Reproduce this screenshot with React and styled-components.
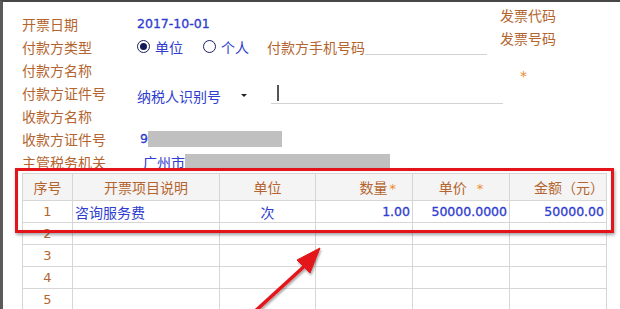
import React from "react";
import styled, { createGlobalStyle } from "styled-components";

const GlobalStyle = createGlobalStyle`
  html, body {
    margin: 0;
    padding: 0;
    background: #ffffff;
  }
  body {
    font-family: "Noto Sans CJK SC", "DejaVu Sans", sans-serif;
  }
`;

const LABEL = "#b4652f";
const BLUE = "#2e3ccf";

const Window = styled.div`
  position: relative;
  width: 620px;
  height: 309px;
  box-sizing: border-box;
  overflow: hidden;
  background: #ffffff;
  border-top: 2px solid #474747;
  border-left: 3px solid #5a5a5a;
`;

const Top = styled.div`
  display: flex;
  align-items: flex-start;
`;

const Form = styled.div`
  display: grid;
  grid-template-columns: 115px 1fr;
  grid-auto-rows: 23px;
  padding: 10px 0 0 19px;
  width: 478px;
`;

const Label = styled.div`
  display: flex;
  align-items: center;
  font-size: 14px;
  color: ${LABEL};
  white-space: nowrap;
`;

const Value = styled.div`
  display: flex;
  align-items: center;
  font-size: 14px;
  color: ${BLUE};
  white-space: nowrap;
  padding-top: ${(p) => p.$shift || 0}px;
`;

const Num = styled.span`
  font-family: "DejaVu Sans", sans-serif;
  font-size: 12.5px;
  color: ${BLUE};
  margin-left: ${(p) => p.$ml || 0}px;
  -webkit-text-stroke: 0.3px ${BLUE};
`;

const Radio = styled.span`
  display: inline-flex;
  align-items: center;
  gap: 5px;
  margin-right: ${(p) => p.$mr || 0}px;
  color: ${BLUE};
`;

const Dot = styled.span`
  width: 13px;
  height: 13px;
  border-radius: 50%;
  border: 1.5px solid #1b2060;
  box-sizing: border-box;
  display: inline-flex;
  align-items: center;
  justify-content: center;
  &::after {
    content: "";
    width: 7px;
    height: 7px;
    border-radius: 50%;
    background: ${(p) => (p.$on ? "#12185a" : "transparent")};
  }
`;

const InlineLabel = styled.span`
  color: ${LABEL};
`;

const Line = styled.span`
  display: inline-block;
  width: ${(p) => p.$w}px;
  height: 15px;
  border-bottom: 1.5px solid #d2d2d2;
  margin-left: ${(p) => p.$ml || 0}px;
  position: relative;
`;

const Caret = styled.span`
  position: absolute;
  left: 6px;
  top: -3px;
  width: 1.5px;
  height: 16px;
  background: #555;
`;

const Select = styled.span`
  display: inline-flex;
  align-items: center;
  width: 124px;
  justify-content: space-between;
`;

const SmallArrow = styled.span`
  width: 0;
  height: 0;
  border-left: 3px solid transparent;
  border-right: 3px solid transparent;
  border-top: 3px solid #222;
  margin-right: 14px;
`;

const Redact = styled.span`
  display: inline-block;
  width: ${(p) => p.$w}px;
  height: 16px;
  background: #c0c0c0;
`;

const Place = styled.span`
  margin-left: ${(p) => p.$ml || 0}px;
`;

const Side = styled.div`
  display: flex;
  flex-direction: column;
  padding-top: 2px;
  font-size: 14px;
  color: ${LABEL};
  line-height: 23px;
`;

const Star = styled.span`
  color: #f08a2a;
  font-family: "DejaVu Sans", sans-serif;
  font-size: 14px;
  line-height: 20px;
  margin: 16px 0 0 20px;
`;

const Table = styled.table`
  margin-left: 19px;
  width: 584px;
  border-collapse: collapse;
  table-layout: fixed;
  font-size: 14px;
  & td, & th {
    border: 1px solid #d6d6d6;
    padding: 0 2px;
    white-space: nowrap;
    overflow: hidden;
  }
`;

const Head = styled.th`
  height: 26px;
  background: #f4f4f4;
  font-weight: normal;
  color: ${LABEL};
  text-align: ${(p) => p.$align || "center"};
  padding-right: ${(p) => p.$pr || 2}px !important;
`;

const HeadStar = styled.span`
  color: #f08a2a;
  font-family: "DejaVu Sans", sans-serif;
  font-size: 13px;
  margin-left: ${(p) => p.$ml || 3}px;
`;

const Cell = styled.td`
  height: 21px;
  color: ${BLUE};
  text-align: ${(p) => p.$align || "left"};
  font-family: ${(p) =>
    p.$num ? '"DejaVu Sans", sans-serif' : '"Noto Sans CJK SC", sans-serif'};
  font-size: ${(p) => (p.$num ? "12.5px" : "14px")};
  -webkit-text-stroke: ${(p) => (p.$num ? "0.3px" : "0")} ${BLUE};
`;

const IndexCell = styled.td`
  height: 21px;
  color: ${LABEL};
  text-align: center;
  font-family: "DejaVu Sans", sans-serif;
  font-size: 13px;
`;

const Frame = styled.div`
  position: absolute;
  left: 12px;
  top: 166px;
  width: 599px;
  height: 65px;
  box-sizing: border-box;
  border: 3px solid #e3151a;
  box-shadow: 1px 2px 3px rgba(0, 0, 0, 0.35), inset 0 0 1px rgba(0, 0, 0, 0.3);
  pointer-events: none;
`;

const Arrow = styled.svg`
  position: absolute;
  left: 0;
  top: 0;
  pointer-events: none;
`;

const rows = [
  { no: 1, name: "咨询服务费", unit: "次", qty: "1.00", price: "50000.0000", amount: "50000.00" },
  { no: 2 },
  { no: 3 },
  { no: 4 },
  { no: 5 },
];

const App = () => {
  return (
    <>
      <GlobalStyle />
      <Window>
        <Top>
          <Form>
            <Label>开票日期</Label>
            <Value>
              <Num>2017-10-01</Num>
            </Value>

            <Label>付款方类型</Label>
            <Value>
              <Radio $mr={20}>
                <Dot $on />
                单位
              </Radio>
              <Radio $mr={18}>
                <Dot />
                个人
              </Radio>
              <InlineLabel>付款方手机号码</InlineLabel>
              <Line $w={122} />
            </Value>

            <Label>付款方名称</Label>
            <Value />

            <Label>付款方证件号</Label>
            <Value $shift={6}>
              <Select>
                纳税人识别号
                <SmallArrow />
              </Select>
              <Line $w={232} $ml={10}>
                <Caret />
              </Line>
            </Value>

            <Label>收款方名称</Label>
            <Value />

            <Label>收款方证件号</Label>
            <Value>
              <Num $ml={3}>9</Num>
              <Redact $w={134} />
            </Value>

            <Label>主管税务机关</Label>
            <Value>
              <Place $ml={6}>广州市</Place>
              <Redact $w={205} />
            </Value>
          </Form>
          <Side>
            <span>发票代码</span>
            <span>发票号码</span>
            <Star>*</Star>
          </Side>
        </Top>

        <Table>
          <colgroup>
            <col style={{ width: 50 }} />
            <col style={{ width: 147 }} />
            <col style={{ width: 96 }} />
            <col style={{ width: 97 }} />
            <col style={{ width: 97 }} />
            <col style={{ width: 97 }} />
          </colgroup>
          <thead>
            <tr>
              <Head>序号</Head>
              <Head>开票项目说明</Head>
              <Head>单位</Head>
              <Head $align="right" $pr={16}>
                数量<HeadStar $ml={2}>*</HeadStar>
              </Head>
              <Head>
                单价<HeadStar $ml={10}>*</HeadStar>
              </Head>
              <Head $align="right">金额（元）</Head>
            </tr>
          </thead>
          <tbody>
            {rows.map((r) => (
              <tr key={r.no}>
                <IndexCell>{r.no}</IndexCell>
                <Cell>{r.name}</Cell>
                <Cell $align="center">{r.unit}</Cell>
                <Cell $align="right" $num>{r.qty}</Cell>
                <Cell $align="right" $num>{r.price}</Cell>
                <Cell $align="right" $num>{r.amount}</Cell>
              </tr>
            ))}
          </tbody>
        </Table>

        <Frame />
        <Arrow width="620" height="309" viewBox="0 0 620 309">
          <defs>
            <filter id="sh" x="-20%" y="-20%" width="140%" height="140%">
              <feDropShadow dx="1" dy="2" stdDeviation="1.2" floodOpacity="0.35" />
            </filter>
          </defs>
          <g filter="url(#sh)" fill="#e3151a" stroke="#e3151a">
            <line x1="249" y1="312" x2="306" y2="260" strokeWidth="3.5" />
            <polygon points="317,246 294,258 307,271" strokeWidth="1" />
          </g>
        </Arrow>
      </Window>
    </>
  );
};

export default App;
